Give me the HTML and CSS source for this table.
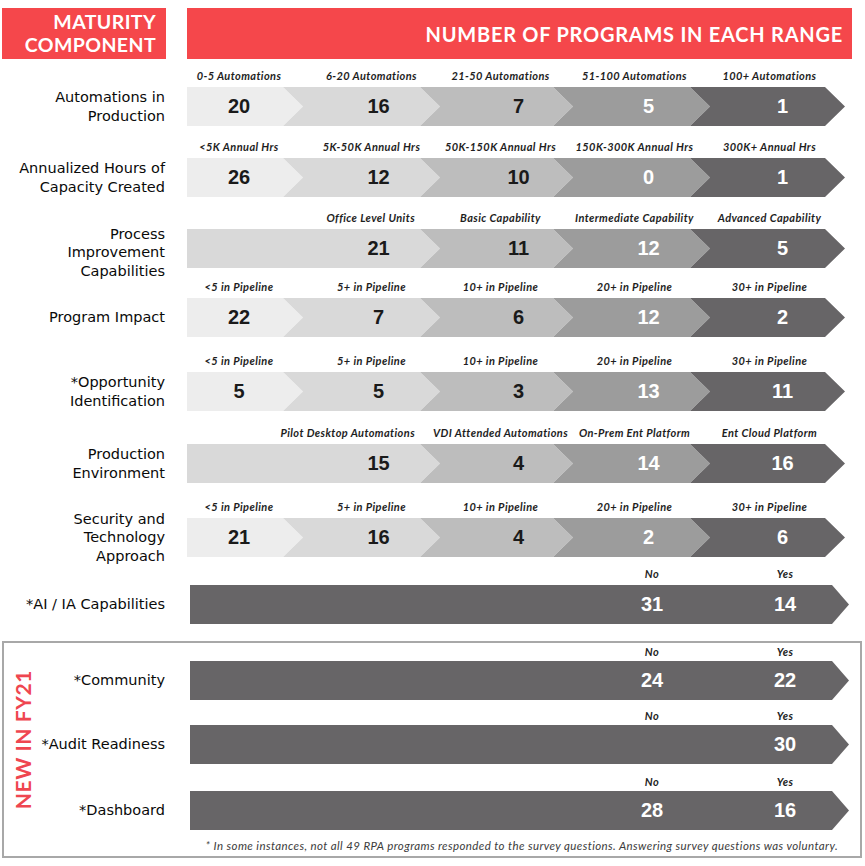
FILE: index.html
```html
<!DOCTYPE html>
<html lang="en">
<head>
<meta charset="utf-8">
<title>Number of programs in each range</title>
<link rel="stylesheet" href="styles.css">
</head>
<body>
<main class="page">
  <header class="head">
    <div class="head-left">MATURITY<br>COMPONENT</div>
    <div class="head-right">NUMBER OF PROGRAMS IN EACH RANGE</div>
  </header>

  <section class="row first">
    <div class="lbl"><span>Automations in<br>Production</span></div>
    <div class="chart">
      <div class="legend"><span class="s1">0-5 Automations</span><span class="s2">6-20 Automations</span><span class="s3">21-50 Automations</span><span class="s4">51-100 Automations</span><span class="s5">100+ Automations</span></div>
      <div class="bar"><div class="seg s1 c1">20</div><div class="seg s2 c2">16</div><div class="seg s3 c3">7</div><div class="seg s4 c4">5</div><div class="seg s5 c5">1</div></div>
    </div>
  </section>

  <section class="row">
    <div class="lbl"><span>Annualized Hours of<br>Capacity Created</span></div>
    <div class="chart">
      <div class="legend"><span class="s1">&lt;5K Annual Hrs</span><span class="s2">5K-50K Annual Hrs</span><span class="s3">50K-150K Annual Hrs</span><span class="s4">150K-300K Annual Hrs</span><span class="s5">300K+ Annual Hrs</span></div>
      <div class="bar"><div class="seg s1 c1">26</div><div class="seg s2 c2">12</div><div class="seg s3 c3">10</div><div class="seg s4 c4">0</div><div class="seg s5 c5">1</div></div>
    </div>
  </section>

  <section class="row">
    <div class="lbl low"><span>Process<br>Improvement<br>Capabilities</span></div>
    <div class="chart">
      <div class="legend"><span class="sw">Office Level Units</span><span class="s3">Basic Capability</span><span class="s4">Intermediate Capability</span><span class="s5">Advanced Capability</span></div>
      <div class="bar"><div class="seg sw c2">21</div><div class="seg s3 c3">11</div><div class="seg s4 c4">12</div><div class="seg s5 c5">5</div></div>
    </div>
  </section>

  <section class="row mt-12">
    <div class="lbl"><span>Program Impact</span></div>
    <div class="chart">
      <div class="legend"><span class="s1">&lt;5 in Pipeline</span><span class="s2">5+ in Pipeline</span><span class="s3">10+ in Pipeline</span><span class="s4">20+ in Pipeline</span><span class="s5">30+ in Pipeline</span></div>
      <div class="bar"><div class="seg s1 c1">22</div><div class="seg s2 c2">7</div><div class="seg s3 c3">6</div><div class="seg s4 c4">12</div><div class="seg s5 c5">2</div></div>
    </div>
  </section>

  <section class="row mt-17">
    <div class="lbl"><span>*Opportunity<br>Identification</span></div>
    <div class="chart">
      <div class="legend"><span class="s1">&lt;5 in Pipeline</span><span class="s2">5+ in Pipeline</span><span class="s3">10+ in Pipeline</span><span class="s4">20+ in Pipeline</span><span class="s5">30+ in Pipeline</span></div>
      <div class="bar"><div class="seg s1 c1">5</div><div class="seg s2 c2">5</div><div class="seg s3 c3">3</div><div class="seg s4 c4">13</div><div class="seg s5 c5">11</div></div>
    </div>
  </section>

  <section class="row mt-15">
    <div class="lbl"><span>Production<br>Environment</span></div>
    <div class="chart">
      <div class="legend"><span class="sw">Pilot Desktop Automations</span><span class="s3">VDI Attended Automations</span><span class="s4">On-Prem Ent Platform</span><span class="s5">Ent Cloud Platform</span></div>
      <div class="bar"><div class="seg sw c2">15</div><div class="seg s3 c3">4</div><div class="seg s4 c4">14</div><div class="seg s5 c5">16</div></div>
    </div>
  </section>

  <section class="row mt-17">
    <div class="lbl"><span>Security and<br>Technology<br>Approach</span></div>
    <div class="chart">
      <div class="legend"><span class="s1">&lt;5 in Pipeline</span><span class="s2">5+ in Pipeline</span><span class="s3">10+ in Pipeline</span><span class="s4">20+ in Pipeline</span><span class="s5">30+ in Pipeline</span></div>
      <div class="bar"><div class="seg s1 c1">21</div><div class="seg s2 c2">16</div><div class="seg s3 c3">4</div><div class="seg s4 c4">2</div><div class="seg s5 c5">6</div></div>
    </div>
  </section>

  <section class="row mt-10">
    <div class="lbl"><span>*AI / IA Capabilities</span></div>
    <div class="chart shift">
      <div class="bin-legend"><span>No</span><span>Yes</span></div>
      <div class="bin-bar"><span>31</span><span>14</span></div>
    </div>
  </section>

  <section class="fy-box">
    <div class="fy-tag"><span>NEW IN FY21</span></div>
    <div class="fy-rows">
      <div class="row in-box">
        <div class="lbl"><span>*Community</span></div>
        <div class="chart">
          <div class="bin-legend"><span>No</span><span>Yes</span></div>
          <div class="bin-bar"><span>24</span><span>22</span></div>
        </div>
      </div>
      <div class="row in-box mt-9">
        <div class="lbl"><span>*Audit Readiness</span></div>
        <div class="chart">
          <div class="bin-legend"><span>No</span><span>Yes</span></div>
          <div class="bin-bar"><span></span><span>30</span></div>
        </div>
      </div>
      <div class="row in-box mt-11">
        <div class="lbl"><span>*Dashboard</span></div>
        <div class="chart">
          <div class="bin-legend"><span>No</span><span>Yes</span></div>
          <div class="bin-bar"><span>28</span><span>16</span></div>
        </div>
      </div>
      <p class="note">* In some instances, not all 49 RPA programs responded to the survey questions. Answering survey questions was voluntary.</p>
    </div>
  </section>
</main>
</body>
</html>
```

FILE: styles.css
```css
* { box-sizing: border-box; }

html, body {
  margin: 0;
  padding: 0;
  background: #ffffff;
}

.page {
  width: 865px;
  padding-top: 8px;
  font-family: "Lato", "Liberation Sans", sans-serif;
  color: #1a1a1a;
}

/* ---------- header ---------- */
.head {
  display: grid;
  grid-template-columns: 166px 665px;
  column-gap: 21px;
  height: 51px;
}

.head-left,
.head-right {
  background: #f5474b;
  color: #ffffff;
  font-weight: 700;
  text-align: right;
}

.head-left {
  margin-left: 2px;
  padding-right: 10px;
  padding-top: 2px;
  font-size: 19.5px;
  line-height: 23px;
  letter-spacing: 0.4px;
}

.head-right {
  display: flex;
  align-items: center;
  justify-content: flex-end;
  padding-right: 9px;
  font-size: 20px;
  letter-spacing: 0.75px;
}

/* ---------- rows ---------- */
.row {
  display: grid;
  grid-template-columns: 166px 1fr;
  column-gap: 21px;
  margin-top: 14px;
}

.row.first { margin-top: 10px; }
.mt-9 { margin-top: 9px; }
.mt-10 { margin-top: 10px; }
.mt-11 { margin-top: 11px; }
.mt-12 { margin-top: 12px; }
.mt-15 { margin-top: 15px; }
.mt-17 { margin-top: 17px; }

.lbl {
  height: 57px;
  padding-top: 18px;
  padding-right: 1px;
  display: flex;
  align-items: center;
  justify-content: flex-end;
  text-align: right;
  font-family: "DejaVu Sans", "Lato", sans-serif;
  font-size: 14.5px;
  line-height: 18.5px;
  color: #0a0a0a;
  white-space: nowrap;
}
.lbl.low { padding-top: 26px; }

.chart { display: flex; flex-direction: column; }
.chart.shift { padding-left: 3px; }

/* legend labels above the chevrons */
.legend {
  display: flex;
  height: 14px;
  margin-bottom: 4px;
  font-size: 11px;
  line-height: 14px;
  letter-spacing: 0.4px;
  font-style: italic;
  font-weight: 700;
  color: #1e1e1e;
  white-space: nowrap;
}

.legend span {
  display: block;
  flex: none;
  text-align: center;
  margin-right: -20px;
}
.legend span:last-child { margin-right: 0; }

/* chevron bar */
.bar {
  display: flex;
  height: 39px;
}

.seg {
  flex: none;
  height: 39px;
  margin-right: -20px;
  display: flex;
  align-items: center;
  justify-content: center;
  font-family: "Liberation Sans", Arial, sans-serif;
  font-weight: 700;
  font-size: 20px;
  clip-path: polygon(0 0, calc(100% - 20px) 0, 100% 50%, calc(100% - 20px) 100%, 0 100%, 20px 50%);
}
.seg:last-child { margin-right: 0; }
.seg.s1, .seg.sw {
  clip-path: polygon(0 0, calc(100% - 20px) 0, 100% 50%, calc(100% - 20px) 100%, 0 100%);
}

.s1 { width: 116px; }
.s2 { width: 157px; }
.s3 { width: 153px; }
.s4 { width: 157px; }
.s5 { width: 155px; }
.sw { width: 253px; }

.bar .s1 { padding-right: 12px; }
.bar .s2 { padding-left: 34px; }
.bar .s3 { padding-left: 44px; }
.bar .s4 { padding-left: 34px; }
.bar .s5 { padding-left: 30px; }
.bar .sw { padding-left: 130px; }

.legend .s1 { padding-right: 12px; }
.legend .s2 { padding-left: 20px; }
.legend .s3 { padding-left: 8px; }
.legend .s4 { padding-left: 6px; }
.legend .s5 { padding-left: 4px; }
.legend .sw { text-align: right; padding-right: 25px; }

.c1 { background: #ededed; color: #1a1a1a; }
.c2 { background: #d9d9d9; color: #1a1a1a; }
.c3 { background: #bdbdbd; color: #1a1a1a; }
.c4 { background: #9c9c9c; color: #ffffff; }
.c5 { background: #676567; color: #ffffff; }

/* yes / no rows */
.bin-legend,
.bin-bar {
  width: 659px;
  display: flex;
  justify-content: flex-end;
  gap: 53px;
  padding-right: 24px;
}

.bin-legend {
  height: 14px;
  margin-bottom: 4px;
  font-size: 11px;
  line-height: 14px;
  letter-spacing: 0.4px;
  font-style: italic;
  font-weight: 700;
  color: #1e1e1e;
}

.bin-legend span,
.bin-bar span {
  width: 80px;
  text-align: center;
}

.bin-bar {
  height: 39px;
  align-items: center;
  background: #676567;
  color: #ffffff;
  font-family: "Liberation Sans", Arial, sans-serif;
  font-weight: 700;
  font-size: 20px;
  clip-path: polygon(0 0, calc(100% - 17px) 0, 100% 50%, calc(100% - 17px) 100%, 0 100%);
}

/* ---------- new in FY21 box ---------- */
.fy-box {
  display: flex;
  margin-top: 17px;
  margin-left: 2px;
  width: 860px;
  border: 2px solid #a8a8a8;
}

.fy-tag {
  width: 36px;
  flex: none;
  display: flex;
  align-items: center;
  justify-content: center;
  padding-bottom: 20px;
}

.fy-tag span {
  writing-mode: vertical-rl;
  transform: rotate(180deg);
  color: #ef4650;
  font-weight: 700;
  font-size: 21px;
  letter-spacing: 0.6px;
  white-space: nowrap;
}

.fy-rows {
  flex: 1;
  padding-top: 2px;
}

.row.in-box {
  grid-template-columns: 126px 1fr;
  column-gap: 24px;
}
.row.in-box:first-child { margin-top: 0; }
.row.in-box .lbl {
  height: 55px;
  padding-top: 16px;
}
.row.in-box .bin-legend {
  height: 14px;
  margin-bottom: 2px;
}

.note {
  margin: 9px 0 0;
  padding-right: 22px;
  padding-bottom: 3px;
  text-align: right;
  font-size: 11.5px;
  line-height: 14px;
  letter-spacing: 0.4px;
  font-style: italic;
  color: #3c3c3c;
  white-space: nowrap;
}
```
